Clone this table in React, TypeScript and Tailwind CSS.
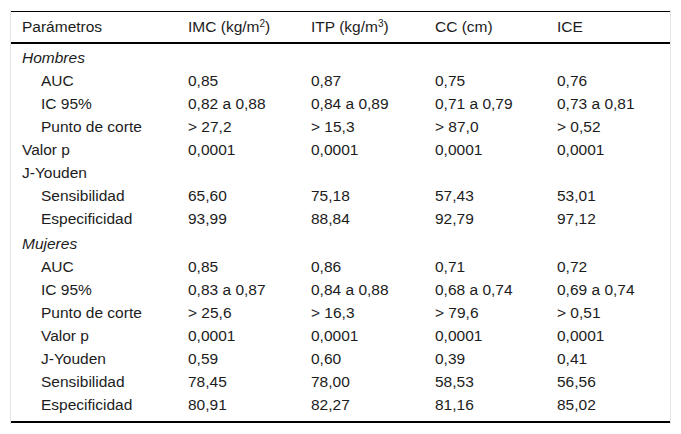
import React from 'react';

type Row = {
  label: string;
  values?: string[];
  indent?: boolean;
  group?: boolean;
  extraTop?: boolean;
};

const rows: Row[] = [
  { label: 'Hombres', group: true },
  { label: 'AUC', indent: true, values: ['0,85', '0,87', '0,75', '0,76'] },
  { label: 'IC 95%', indent: true, values: ['0,82 a 0,88', '0,84 a 0,89', '0,71 a 0,79', '0,73 a 0,81'] },
  { label: 'Punto de corte', indent: true, values: ['> 27,2', '> 15,3', '> 87,0', '> 0,52'] },
  { label: 'Valor p', values: ['0,0001', '0,0001', '0,0001', '0,0001'] },
  { label: 'J-Youden' },
  { label: 'Sensibilidad', indent: true, values: ['65,60', '75,18', '57,43', '53,01'] },
  { label: 'Especificidad', indent: true, values: ['93,99', '88,84', '92,79', '97,12'] },
  { label: 'Mujeres', group: true, extraTop: true },
  { label: 'AUC', indent: true, values: ['0,85', '0,86', '0,71', '0,72'] },
  { label: 'IC 95%', indent: true, values: ['0,83 a 0,87', '0,84 a 0,88', '0,68 a 0,74', '0,69 a 0,74'] },
  { label: 'Punto de corte', indent: true, values: ['> 25,6', '> 16,3', '> 79,6', '> 0,51'] },
  { label: 'Valor p', indent: true, values: ['0,0001', '0,0001', '0,0001', '0,0001'] },
  { label: 'J-Youden', indent: true, values: ['0,59', '0,60', '0,39', '0,41'] },
  { label: 'Sensibilidad', indent: true, values: ['78,45', '78,00', '58,53', '56,56'] },
  { label: 'Especificidad', indent: true, values: ['80,91', '82,27', '81,16', '85,02'] },
];

const grid = 'grid grid-cols-[166px_123px_124px_122px_1fr] pl-[11px]';

export default function App() {
  return (
    <div className="w-[681px] h-[434px] bg-white pt-[10px] pl-[10px] font-['Liberation_Sans',Arial,sans-serif] text-[15.5px] text-[#1c1c1c]">
      <div className="w-[661px] h-[414px] border-x border-[#e4e4e4] pt-[1px]">
        <div className="border-t border-black border-b-2">
          <div className={`${grid} h-[30px] items-center`}>
            <div>Parámetros</div>
            <div>
              IMC (kg/m<sup className="text-[10px]">2</sup>)
            </div>
            <div>
              ITP (kg/m<sup className="text-[10px]">3</sup>)
            </div>
            <div>CC (cm)</div>
            <div>ICE</div>
          </div>
        </div>
        <div className="pt-[2px] pb-[5px] border-b-2 border-black">
          {rows.map((r, i) => (
            <div
              key={`row-${i}`}
              className={`${grid} leading-[23px] ${r.extraTop ? 'pt-[2px]' : ''}`}
            >
              <div className={`${r.indent ? 'pl-[19px]' : ''} ${r.group ? 'italic' : ''}`}>{r.label}</div>
              {(r.values ?? ['', '', '', '']).map((v, j) => (
                <div key={`v-${i}-${j}`}>{v}</div>
              ))}
            </div>
          ))}
        </div>
      </div>
    </div>
  );
}
